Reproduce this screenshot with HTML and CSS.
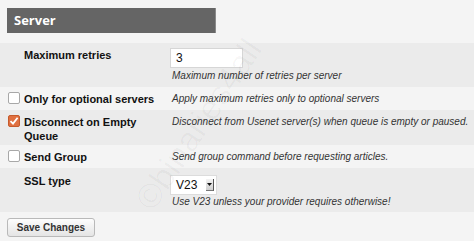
FILE: index.html
```html
<!DOCTYPE html>
<html lang="en">
<head>
  <meta charset="utf-8">
  <title>Server settings</title>
  <link rel="stylesheet" href="styles.css">
</head>
<body>

<div class="section-title">Server</div>

<form class="settings">
  <div class="row row-dark">
    <div class="label plain">Maximum retries</div>
    <div class="value">
      <div class="text-input">3</div>
      <div class="help">Maximum number of retries per server</div>
    </div>
  </div>

  <div class="row">
    <div class="label"><span class="check"></span><span class="label-text">Only for optional servers</span></div>
    <div class="value">
      <div class="help">Apply maximum retries only to optional servers</div>
    </div>
  </div>

  <div class="row row-dark row-wrap">
    <div class="label">
      <span class="check checked">
        <svg width="10" height="10" viewBox="0 0 10 10"><path d="M1.5 5.2 L4 7.6 L8.6 1.8" fill="none" stroke="#fff" stroke-width="1.8"/></svg>
      </span>
      <span class="label-text">Disconnect on Empty Queue</span>
    </div>
    <div class="value">
      <div class="help">Disconnect from Usenet server(s) when queue is empty or paused.</div>
    </div>
  </div>

  <div class="row">
    <div class="label"><span class="check"></span><span class="label-text">Send Group</span></div>
    <div class="value">
      <div class="help">Send group command before requesting articles.</div>
    </div>
  </div>

  <div class="row row-dark row-ssl">
    <div class="label plain">SSL type</div>
    <div class="value">
      <div class="select-box">
        <span>V23</span>
        <span class="select-arrow">
          <svg width="7" height="9" viewBox="0 0 7 9"><path d="M1 3 L6 3 L3.5 6 Z" fill="#111"/></svg>
        </span>
      </div>
      <div class="help">Use V23 unless your provider requires otherwise!</div>
    </div>
  </div>

  <div class="actions">
    <button type="button" class="save">Save Changes</button>
  </div>
</form>

<div class="watermark">&copy;binaries4all</div>

</body>
</html>
```

FILE: styles.css
```css
body {
  font-family: 'Liberation Sans', Arial, sans-serif;
  background-color: #f4f4f4;
  margin: 0;
  color: #222;
  position: relative;
  overflow: hidden;
  height: 241px;
}
.section-title {
  background-color: #656565;
  color: #fff;
  font-family: 'Open Sans', sans-serif;
  font-weight: bold;
  font-size: 13px;
  width: 201px;
  height: 25px;
  line-height: 25px;
  padding-left: 7px;
  margin: 8px 0 10px 7px;
  border-right: 1px solid #8a8a8a;
}
.row {
  display: grid;
  grid-template-columns: 162px 1fr;
  padding: 5px 0 4px 8px;
}
.row-dark {
  background-color: #ebebeb;
}
.row-wrap {
  padding-bottom: 2px;
}
.label {
  display: flex;
  align-items: flex-start;
  gap: 4px;
  font-weight: bold;
  font-size: 11px;
  line-height: 14px;
  color: #111;
}
.label.plain {
  padding-left: 16px;
}
.label-text {
  max-width: 136px;
}
.check {
  flex: none;
  width: 10px;
  height: 10px;
  margin-top: 0;
  border: 1px solid #a8a8a8;
  border-radius: 2px;
  background-color: #fff;
  display: flex;
  align-items: center;
  justify-content: center;
}
.check.checked {
  background-color: #e07040;
  border-color: #c55a2c;
}
.value {
  display: flex;
  flex-direction: column;
  align-items: flex-start;
}
.text-input {
  width: 66px;
  height: 18px;
  line-height: 18px;
  padding-left: 5px;
  background-color: #fff;
  border: 1px solid #d6d6d6;
  font-size: 12px;
  color: #111;
}
.help {
  font-style: italic;
  font-size: 10px;
  line-height: 14px;
  color: #333;
  margin-left: 2px;
}
.text-input + .help {
  margin-top: 1px;
}
.row-ssl {
  padding-top: 6px;
  padding-bottom: 3px;
}
.select-box {
  display: flex;
  align-items: center;
  justify-content: space-between;
  width: 38px;
  height: 18px;
  margin-top: 1px;
  padding-left: 5px;
  padding-right: 2px;
  background-color: #fff;
  border: 1px solid #dcdcdc;
  font-size: 12px;
  color: #111;
}
.select-arrow {
  width: 7px;
  height: 11px;
  background: linear-gradient(#f4f4f4, #cfcfcf);
  border-right: 1px solid #555;
  border-bottom: 1px solid #777;
  display: flex;
  align-items: center;
  justify-content: center;
}
.actions {
  padding: 5px 0 0 7px;
}
.save {
  font-family: 'Liberation Sans', Arial, sans-serif;
  font-weight: bold;
  font-size: 10px;
  color: #333;
  width: 88px;
  height: 19px;
  padding: 0;
  background: linear-gradient(#fdfdfd, #e4e4e4);
  border: 1px solid #b9b9b9;
  border-radius: 3px;
  cursor: pointer;
}
.watermark {
  position: absolute;
  left: 100px;
  top: 105px;
  font-family: 'Liberation Sans', Arial, sans-serif;
  font-size: 34px;
  color: rgba(0, 0, 0, 0.03);
  transform: rotate(-56deg);
  pointer-events: none;
  white-space: nowrap;
}
```
